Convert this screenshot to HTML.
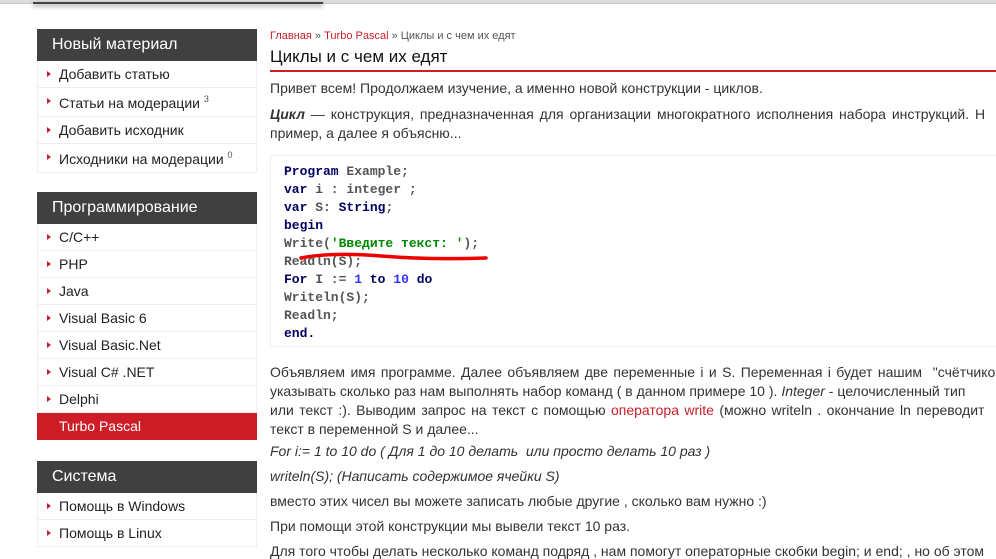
<!DOCTYPE html>
<html><head><meta charset="utf-8"><style>
body{margin:0;width:996px;height:554px;overflow:hidden;background:#fff;font-family:"Liberation Sans",Arial,sans-serif;color:#222;position:relative}
.topbar{position:absolute;left:0;top:0;width:996px;height:3px;background:#ddd;border-bottom:1px solid #c8c8c8}
.topshadow{position:absolute;left:33px;top:2px;width:290px;height:2px;background:#444;box-shadow:0 2px 4px rgba(0,0,0,.5)}
.side{position:absolute;left:37px;width:220px}
.h{background:#404040;color:#fff;font-size:16px;height:32px;line-height:32px;padding-left:15px}
.it{height:26px;line-height:26px;border:1px solid #eee;border-top:none;font-size:14px;color:#222;padding-left:21px;position:relative}
.it:before{content:"";position:absolute;left:9px;top:10px;border-left:4px solid #c81e28;border-top:3.5px solid transparent;border-bottom:3.5px solid transparent}
.it sup{font-size:9px;color:#555;line-height:0;vertical-align:6px}
.it.act{background:#cf1d27;color:#fff;border-color:#cf1d27}
.it.act:before{display:none}
.main{position:absolute;left:270px;top:0;width:740px;font-size:14px;color:#333}
.p{position:absolute;left:0;white-space:nowrap}
a{color:#c81e28;text-decoration:none}
.code{position:absolute;left:0;top:155px;width:740px;height:190px;border:1px solid #eee}
.cl{position:absolute;left:13px;font-family:"Liberation Mono","Courier New",monospace;font-size:13px;color:#555;white-space:pre;font-weight:bold}
.k{color:#000060;font-weight:bold}
</style></head><body>
<div class="topbar"></div><div class="topshadow"></div>
<div class="side" style="top:29px">
<div class="h">Новый материал</div>
<div class="it">Добавить статью</div>
<div class="it" style="height:28px;line-height:30px">Статьи на модерации <sup>3</sup></div>
<div class="it">Добавить исходник</div>
<div class="it" style="height:28px;line-height:30px">Исходники на модерации <sup>0</sup></div>
</div>
<div class="side" style="top:192px">
<div class="h">Программирование</div>
<div class="it">C/C++</div><div class="it">PHP</div><div class="it">Java</div><div class="it">Visual Basic 6</div><div class="it">Visual Basic.Net</div><div class="it">Visual C# .NET</div><div class="it">Delphi</div><div class="it act">Turbo Pascal</div>
</div>
<div class="side" style="top:461px">
<div class="h">Система</div>
<div class="it">Помощь в Windows</div><div class="it">Помощь в Linux</div>
</div>
<div class="main">
<div class="p" style="top:30px;font-size:11px;color:#555"><a>Главная</a> » <a>Turbo Pascal</a> » Циклы и с чем их едят</div>
<div class="p" style="top:47px;font-size:17px;color:#111">Циклы и с чем их едят</div>
<div style="position:absolute;left:0;top:70px;width:740px;height:2px;background:#cf1d27"></div>
<div class="p" style="top:80px">Привет всем! Продолжаем изучение, а именно новой конструкции - циклов.</div>
<div class="p" style="top:106px;word-spacing:2px"><b><i>Цикл</i></b> — конструкция, предназначенная для организации многократного исполнения набора инструкций. Н</div>
<div class="p" style="top:125px">пример, а далее я объясню...</div>
<div class="code">
<div class="cl" style="top:8px"><span class="k">Program</span> Example;</div>
<div class="cl" style="top:26px"><span class="k">var</span> i : integer ;</div>
<div class="cl" style="top:44px"><span class="k">var</span> S: <span class="k">String</span>;</div>
<div class="cl" style="top:62px"><span class="k">begin</span></div>
<div class="cl" style="top:80px">Write(<span style="color:#080">'Введите текст: '</span>);</div>
<div class="cl" style="top:98px">Readln(S);</div>
<div class="cl" style="top:116px"><span class="k">For</span> I := <span style="color:#33f">1</span> <span class="k">to</span> <span style="color:#33f">10</span> <span class="k">do</span></div>
<div class="cl" style="top:134px">Writeln(S);</div>
<div class="cl" style="top:152px">Readln;</div>
<div class="cl" style="top:170px"><span class="k">end.</span></div>
<svg style="position:absolute;left:0;top:0" width="300" height="120"><path d="M30 102 Q60 96 110 100 T215 102" stroke="#e00" stroke-width="3.5" fill="none" stroke-linecap="round"/></svg>
</div>
<div class="p" style="top:364px;word-spacing:1.5px">Объявляем имя программе. Далее объявляем две переменные i и S. Переменная i будет нашим &nbsp;"счётчиком</div>
<div class="p" style="top:383px">указывать сколько раз нам выполнять набор команд ( в данном примере 10 ). <i>Integer</i> - целочисленный тип</div>
<div class="p" style="top:402px;word-spacing:1.5px">или текст :). Выводим запрос на текст с помощью <a>оператора write</a> (можно writeln . окончание ln переводит</div>
<div class="p" style="top:421px">текст в переменной S и далее...</div>
<div class="p" style="top:443px"><i>For i:= 1 to 10 do ( Для 1 до 10 делать &nbsp;или просто делать 10 раз )</i></div>
<div class="p" style="top:468px"><i>writeln(S); (Написать содержимое ячейки S)</i></div>
<div class="p" style="top:493px">вместо этих чисел вы можете записать любые другие , сколько вам нужно :)</div>
<div class="p" style="top:518px">При помощи этой конструкции мы вывели текст 10 раз.</div>
<div class="p" style="top:543px">Для того чтобы делать несколько команд подряд , нам помогут операторные скобки begin; и end; , но об этом</div>
</div>
</body></html>
